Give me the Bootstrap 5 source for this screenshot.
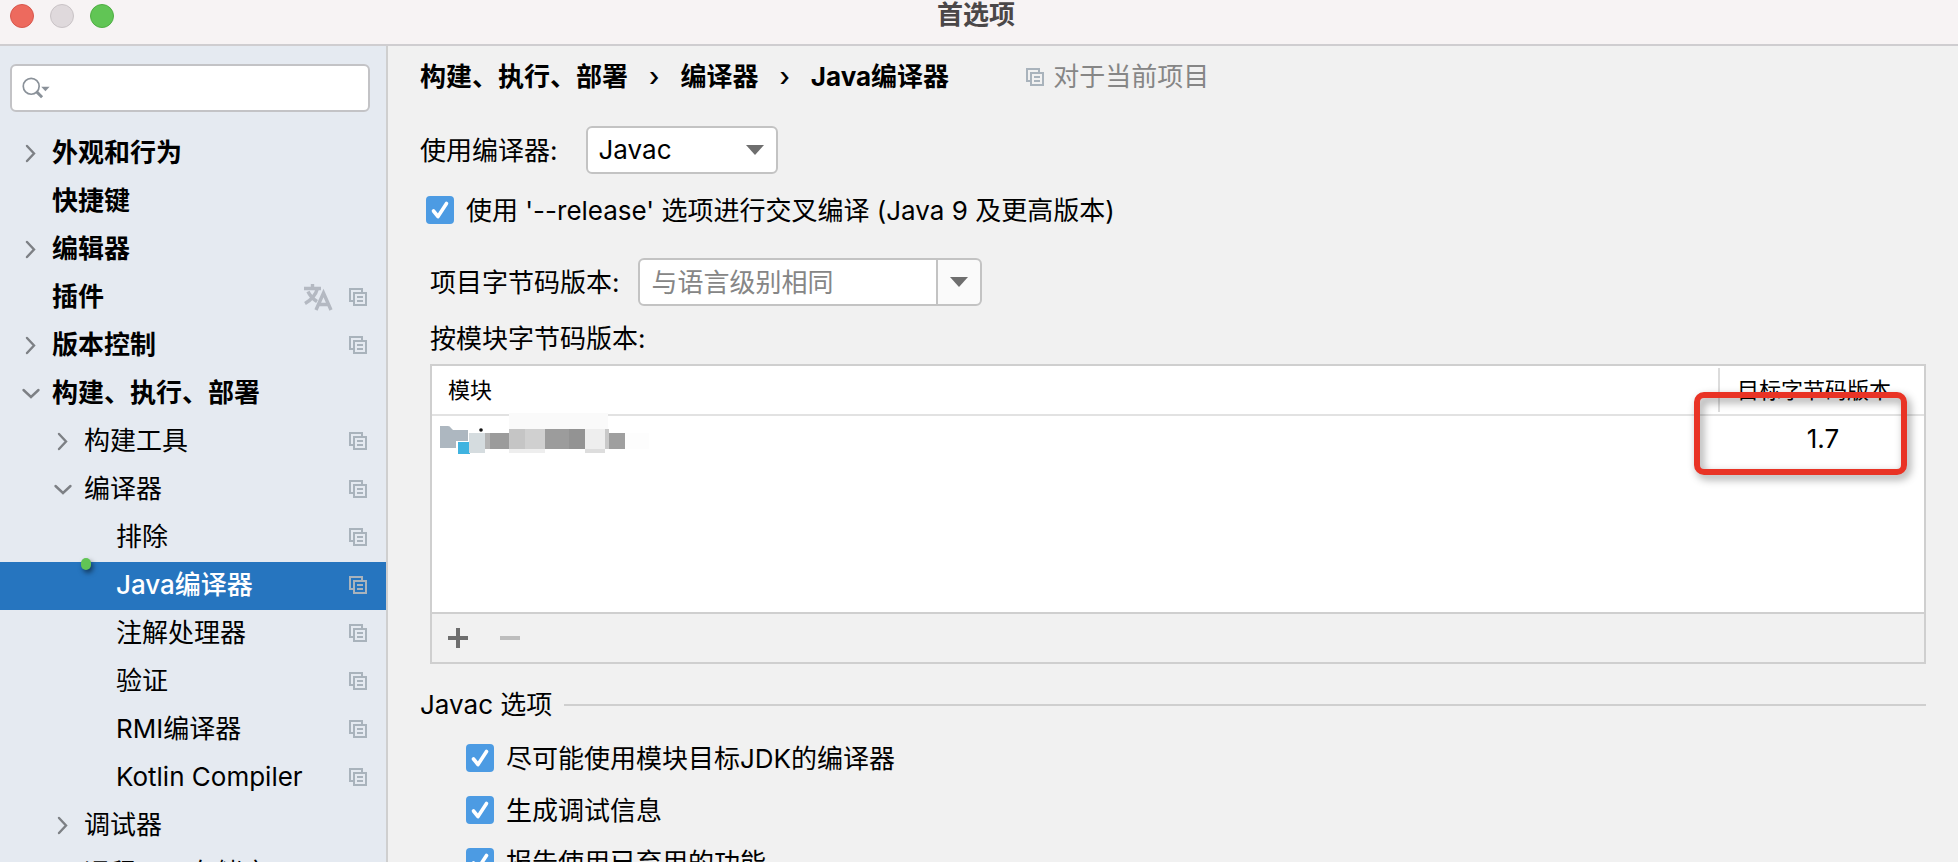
<!DOCTYPE html>
<html lang="zh-CN">
<head>
<meta charset="utf-8">
<meta name="viewport" content="width=device-width, initial-scale=1">
<title>首选项</title>
<link href="https://cdn.jsdelivr.net/npm/bootstrap@5.3.0/dist/css/bootstrap.min.css" rel="stylesheet">
<style>
  :root { --line: #cfcfcf; --field-line: #c3c3c3; --side: #e5eaf1; --accent: #2675bf; --tick: #4c9be3; }
  body { font-family: Inter, "Noto Sans CJK SC", sans-serif; font-size: 26px; line-height: 36px; color: #000; background: #f1f1f1; }
  .window { height: 100vh; overflow: hidden; }
  .titlebar { height: 46px; background: #f7f3f4; border-bottom: 2px solid #cfcdd0; color: #4b4748; padding-right: 6px; }
  .titlebar h1 { font-size: 26px; line-height: 30px; }
  .lights { margin: 4px 0 0 10px; gap: 16px; }
  .light { width: 24px; height: 24px; padding: 0; border-radius: 50%; border: 1px solid #c9c3c6; background: #dfd9dc; }
  .light.close-win { background: #ed6a5e; border-color: #d8574d; }
  .light.zoom-win { background: #61c555; border-color: #4fae43; }
  .sidebar { width: 388px; background: var(--side); border-right: 2px solid var(--line); }
  .search { margin: 18px 16px 18px 10px; height: 48px; background: #fff; border: 2px solid #c3c3c6; border-radius: 6px; padding-left: 10px; }
  .search input { border: 0; outline: 0; background: transparent; font-size: 24px; min-width: 0; }
  .tree-item { height: 48px; padding: 0 18px 2px 0; color: #000; gap: 7px; }
  .tree-item.lvl1 { padding-left: 17px; }
  .tree-item.lvl2 { padding-left: 49px; }
  .tree-item.lvl3 { padding-left: 81px; }
  .tree-item .arrow { width: 28px; height: 28px; flex: none; }
  .tree-item.selected { background: var(--accent); color: #fff; position: relative; }
  .marker-dot { position: absolute; left: 81px; top: -4px; width: 10px; height: 12px; border-radius: 5px; background: #61c555; box-shadow: 2px 3px 5px rgba(0,0,0,.5); }
  .content-pane { padding: 13px 32px 0 32px; min-width: 0; }
  .content-pane label { padding-top: 2px; }
  .crumbs { gap: 21px; }
  .crumbs a { color: #000; }
  .scope { color: #868686; margin-left: 76px; }
  .compiler-row { margin-top: 31px; gap: 28px; }
  .release-row { margin: 17px 0 29px 6px; gap: 12px; }
  .indented { margin-left: 10px; }
  .field { height: 48px; border: 2px solid var(--field-line); border-radius: 6px; background: #fff; font-size: 26px; line-height: 36px; color: #000; }
  select.field { appearance: none; width: 192px; padding: 0 11px; display: block; }
  .pick { position: relative; }
  .pick svg { position: absolute; right: 14px; top: 19px; pointer-events: none; }
  .combo-row { gap: 18px; }
  .combo input { width: 300px; border-radius: 6px 0 0 6px; padding: 0 12px; }
  .combo input::placeholder { color: #868686; opacity: 1; }
  .combo button { width: 46px; margin-left: -2px; border-radius: 0 6px 6px 0; background: #fafafa; }
  .tick { appearance: none; width: 28px; height: 28px; border-radius: 4px; background: var(--tick); display: block; }
  .tick-box { position: relative; }
  .tick-box svg { position: absolute; left: 0; top: 0; pointer-events: none; }
  .module-title { margin: 15px 0 7px; }
  .module-box { border: 2px solid var(--line); position: relative; }
  .module-body { background: #fff; height: 246px; }
  .module-table { width: 100%; border-collapse: separate; border-spacing: 0; }
  .module-table th { font-size: 22px; font-weight: 400; line-height: 30px; height: 50px; border-bottom: 2px solid #e2e2e2; padding: 0 0 0 16px; }
  .module-table td { height: 46px; padding: 0 0 0 8px; }
  .module-table td svg { display: block; overflow: visible; }
  .module-table .col-target { width: 206px; padding-left: 0; }
  .col-target span { display: block; border-left: 2px solid #dcdcdc; padding: 7px 0 7px 17px; white-space: nowrap; }
  .module-table td.col-target { text-align: center; padding-left: 4px; }
  .toolbar { height: 50px; border-top: 2px solid var(--line); padding-left: 12px; gap: 24px; }
  .toolbar button { border: 0; padding: 0; background: transparent; width: 28px; height: 28px; display: flex; }
  .callout { position: absolute; right: 17px; top: 26px; width: 213px; height: 83px; border: 6px solid #e93325; border-radius: 10px; filter: drop-shadow(3px 4px 4px rgba(0,0,0,.4)); pointer-events: none; }
  .group-title { margin: 23px 0 9px; gap: 12px; }
  .rule { height: 2px; background: var(--line); }
  .check-row { gap: 12px; height: 52px; padding-left: 46px; }
</style>
</head>
<body>
<svg width="0" height="0" class="position-absolute" aria-hidden="true">
  <symbol id="copy" viewBox="0 0 20 20"><path d="M5 14H2V2H14V5M6 6H18V18H6ZM9 10H15M9 14H15" fill="none" stroke="#a9b3bc" stroke-width="2"/></symbol>
  <symbol id="right" viewBox="0 0 28 28"><path d="M10 7L17 14.500L10 22" fill="none" stroke="#7d8085" stroke-width="2.400" stroke-linecap="round"/></symbol>
  <symbol id="down" viewBox="0 0 28 28"><path d="M6.500 11L14 18L21.500 11" fill="none" stroke="#7d8085" stroke-width="2.400" stroke-linecap="round"/></symbol>
  <symbol id="tri" viewBox="0 0 18 10"><path d="M0 0H18L9 10Z" fill="#6e6e6e"/></symbol>
  <symbol id="check" viewBox="0 0 28 28"><path d="M7.500 15L12 20.500L20.500 7.500" fill="none" stroke="#fff" stroke-width="3.600" stroke-linecap="round" stroke-linejoin="round"/></symbol>
</svg>
<div class="window d-flex flex-column">
  <header class="titlebar flex-shrink-0">
    <div class="row g-0">
      <div class="col">
        <div class="lights d-flex">
          <button class="light close-win" aria-label="关闭"></button>
          <button class="light" aria-label="最小化" disabled></button>
          <button class="light zoom-win" aria-label="缩放"></button>
        </div>
      </div>
      <h1 class="col-auto m-0 fw-bold">首选项</h1>
      <div class="col"></div>
    </div>
  </header>
  <div class="d-flex flex-grow-1 overflow-hidden">
    <aside class="sidebar flex-shrink-0 overflow-hidden">
      <div class="search d-flex align-items-center">
        <svg width="36" height="28" viewBox="0 0 36 28" aria-hidden="true"><circle cx="11" cy="12" r="9.500" fill="none" stroke="#8a9199" stroke-width="2"/><path d="M17 18L24 25" stroke="#8a9199" stroke-width="3.500"/><path d="M23 12.500H33L28 18Z" fill="#8a9199"/></svg>
        <input type="search" class="flex-grow-1" aria-label="搜索">
      </div>
      <nav class="d-flex flex-column" aria-label="设置">
        <a href="#" class="tree-item lvl1 d-flex align-items-center text-decoration-none fw-bold"><svg class="arrow"><use href="#right"/></svg><span class="me-auto">外观和行为</span></a>
        <a href="#" class="tree-item lvl1 d-flex align-items-center text-decoration-none fw-bold"><span class="arrow"></span><span class="me-auto">快捷键</span></a>
        <a href="#" class="tree-item lvl1 d-flex align-items-center text-decoration-none fw-bold"><svg class="arrow"><use href="#right"/></svg><span class="me-auto">编辑器</span></a>
        <a href="#" class="tree-item lvl1 d-flex align-items-center text-decoration-none fw-bold"><span class="arrow"></span><span class="me-auto">插件</span><svg class="me-2" width="30" height="28" viewBox="0 0 30 28" fill="none" stroke="#b4b9c2" stroke-width="3.400"><path d="M1 5.500H18M9.500 1V5.500M14.500 5.500C13 11 8 17 2 20.500M5 8.500C7 13 10 16 14 18.500"/><path d="M13 27L20.500 10L28 27M15.500 21.500H25.500"/></svg><svg width="20" height="20"><use href="#copy"/></svg></a>
        <a href="#" class="tree-item lvl1 d-flex align-items-center text-decoration-none fw-bold"><svg class="arrow"><use href="#right"/></svg><span class="me-auto">版本控制</span><svg width="20" height="20"><use href="#copy"/></svg></a>
        <a href="#" class="tree-item lvl1 d-flex align-items-center text-decoration-none fw-bold"><svg class="arrow"><use href="#down"/></svg><span class="me-auto">构建、执行、部署</span></a>
        <a href="#" class="tree-item lvl2 d-flex align-items-center text-decoration-none"><svg class="arrow"><use href="#right"/></svg><span class="me-auto">构建工具</span><svg width="20" height="20"><use href="#copy"/></svg></a>
        <a href="#" class="tree-item lvl2 d-flex align-items-center text-decoration-none"><svg class="arrow"><use href="#down"/></svg><span class="me-auto">编译器</span><svg width="20" height="20"><use href="#copy"/></svg></a>
        <a href="#" class="tree-item lvl3 d-flex align-items-center text-decoration-none"><span class="arrow"></span><span class="me-auto">排除</span><svg width="20" height="20"><use href="#copy"/></svg></a>
        <a href="#" class="tree-item lvl3 selected d-flex align-items-center text-decoration-none fw-medium" aria-current="page"><span class="marker-dot"></span><span class="arrow"></span><span class="me-auto">Java编译器</span><svg width="20" height="20"><use href="#copy"/></svg></a>
        <a href="#" class="tree-item lvl3 d-flex align-items-center text-decoration-none"><span class="arrow"></span><span class="me-auto">注解处理器</span><svg width="20" height="20"><use href="#copy"/></svg></a>
        <a href="#" class="tree-item lvl3 d-flex align-items-center text-decoration-none"><span class="arrow"></span><span class="me-auto">验证</span><svg width="20" height="20"><use href="#copy"/></svg></a>
        <a href="#" class="tree-item lvl3 d-flex align-items-center text-decoration-none"><span class="arrow"></span><span class="me-auto">RMI编译器</span><svg width="20" height="20"><use href="#copy"/></svg></a>
        <a href="#" class="tree-item lvl3 d-flex align-items-center text-decoration-none"><span class="arrow"></span><span class="me-auto">Kotlin Compiler</span><svg width="20" height="20"><use href="#copy"/></svg></a>
        <a href="#" class="tree-item lvl2 d-flex align-items-center text-decoration-none"><svg class="arrow"><use href="#right"/></svg><span class="me-auto">调试器</span></a>
        <a href="#" class="tree-item lvl2 d-flex align-items-center text-decoration-none"><span class="arrow"></span><span class="me-auto">远程 Jar 存储库</span><svg width="20" height="20"><use href="#copy"/></svg></a>
      </nav>
    </aside>
    <main class="content-pane flex-grow-1">
      <div class="d-flex align-items-center">
        <nav class="crumbs fw-bold d-flex" aria-label="路径"><a href="#" class="text-decoration-none">构建、执行、部署</a><span class="fw-medium">›</span><a href="#" class="text-decoration-none">编译器</a><span class="fw-medium">›</span><span>Java编译器</span></nav>
        <div class="scope d-flex align-items-center gap-2"><svg width="20" height="20"><use href="#copy"/></svg><span>对于当前项目</span></div>
      </div>
      <div class="compiler-row d-flex align-items-center">
        <label for="compiler">使用编译器:</label>
        <div class="pick"><select id="compiler" class="field"><option>Javac</option></select><svg width="18" height="10"><use href="#tri"/></svg></div>
      </div>
      <div class="release-row d-flex align-items-center">
        <div class="tick-box"><input type="checkbox" id="release" class="tick" checked><svg width="28" height="28"><use href="#check"/></svg></div>
        <label for="release">使用 '--release' 选项进行交叉编译 (Java 9 及更高版本)</label>
      </div>
      <section class="indented">
        <div class="combo-row d-flex align-items-center">
          <label for="bytecode">项目字节码版本:</label>
          <div class="combo d-flex">
            <input type="text" id="bytecode" class="field" placeholder="与语言级别相同">
            <button class="field d-flex align-items-center justify-content-center p-0" aria-label="展开"><svg width="18" height="10"><use href="#tri"/></svg></button>
          </div>
        </div>
        <div class="module-title">按模块字节码版本:</div>
        <div class="module-box">
          <div class="module-body">
            <table class="module-table">
              <thead><tr><th>模块</th><th class="col-target"><span>目标字节码版本</span></th></tr></thead>
              <tbody><tr>
                <td class="align-top">
                  <svg width="216" height="40" role="img" aria-label="模块">
                    <path d="M0 10H8Q10 10 11 12L13 14H28V25H16V32H0Z" fill="#adb7c0"/>
                    <rect x="18" y="26" width="12" height="12" fill="#3fb3e0"/>
                    <circle cx="41" cy="14" r="1.800" fill="#111"/>
                    <path d="M69 -3H168V13H69Z" fill="#fafafa"/>
                    <rect x="29" y="17" width="16" height="20" fill="#d5dcdf"/>
                    <rect x="45" y="17" width="5" height="16" fill="#b4b4b4"/>
                    <rect x="50" y="17" width="19" height="16" fill="#9b9b9b"/>
                    <rect x="69" y="13" width="16" height="20" fill="#c5c5c5"/>
                    <rect x="85" y="13" width="20" height="20" fill="#d0d0d0"/>
                    <rect x="69" y="33" width="36" height="4" fill="#eee"/>
                    <rect x="105" y="13" width="24" height="20" fill="#9c9c9c"/>
                    <rect x="129" y="13" width="16" height="20" fill="#939393"/>
                    <rect x="145" y="13" width="20" height="20" fill="#eee"/>
                    <rect x="145" y="33" width="20" height="4" fill="#ddd"/>
                    <rect x="165" y="13" width="4" height="20" fill="#c9c9c9"/>
                    <rect x="169" y="17" width="16" height="16" fill="#9f9f9f"/>
                    <rect x="185" y="17" width="24" height="16" fill="#fdfdfd"/>
                  </svg>
                </td>
                <td class="col-target">1.7</td>
              </tr></tbody>
            </table>
          </div>
          <div class="toolbar d-flex align-items-center">
            <button aria-label="添加"><svg width="28" height="28"><path d="M4 14H24M14 4V24" stroke="#6e6e6e" stroke-width="4"/></svg></button>
            <button aria-label="移除" disabled><svg width="28" height="28"><path d="M4 14H24" stroke="#bdbdbd" stroke-width="4"/></svg></button>
          </div>
          <div class="callout"></div>
        </div>
      </section>
      <div class="group-title d-flex align-items-center"><span>Javac 选项</span><div class="rule flex-grow-1"></div></div>
      <div class="check-row d-flex align-items-center">
        <div class="tick-box"><input type="checkbox" id="opt-jdk" class="tick" checked><svg width="28" height="28"><use href="#check"/></svg></div>
        <label for="opt-jdk">尽可能使用模块目标JDK的编译器</label>
      </div>
      <div class="check-row d-flex align-items-center">
        <div class="tick-box"><input type="checkbox" id="opt-debug" class="tick" checked><svg width="28" height="28"><use href="#check"/></svg></div>
        <label for="opt-debug">生成调试信息</label>
      </div>
      <div class="check-row d-flex align-items-center">
        <div class="tick-box"><input type="checkbox" id="opt-deprecated" class="tick" checked><svg width="28" height="28"><use href="#check"/></svg></div>
        <label for="opt-deprecated">报告使用已弃用的功能</label>
      </div>
    </main>
  </div>
</div>
<script src="https://cdn.jsdelivr.net/npm/bootstrap@5.3.0/dist/js/bootstrap.bundle.min.js"></script>
</body>
</html>
